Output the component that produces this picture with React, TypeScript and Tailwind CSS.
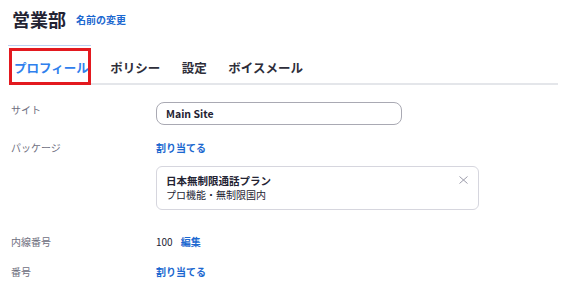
import React from "react";

export default function App() {
  const tabs = ["ポリシー", "設定", "ボイスメール"];
  return (
    <div className="w-[570px] h-[300px] bg-white overflow-hidden font-['Noto_Sans_CJK_JP','Noto_Sans',sans-serif] text-[#232333]">
      {/* Header */}
      <div className="pl-[12px] pt-[10px] flex items-center h-[28px]">
        <h1 className="text-[18px] leading-none font-bold text-[#232333]">営業部</h1>
        <a className="ml-[10px] mt-[2px] text-[10px] leading-none font-bold text-[#1c68d0]">名前の変更</a>
      </div>

      {/* Tabs */}
      <div className="mt-[20px] ml-[10px] mr-[12px] h-[37px] pt-[14px] px-[4px] border-b-2 border-[#e4e6ea] flex gap-[21.5px] relative">
        <div className="absolute left-[-2px] top-[-3px] w-[83px] h-[1px] bg-[#bcd2f3]" />
        <div className="absolute left-[-1px] top-0 w-[82px] h-[37px] border-[3px] border-[#e3191f]" />
        <span className="text-[12.5px] leading-none font-bold text-[#2f80ed]">プロフィール</span>
        {tabs.map((t) => (
          <span key={t} className="text-[12.5px] leading-none font-bold text-[#2e2e3a]">
            {t}
          </span>
        ))}
      </div>

      {/* Rows */}
      <div className="pl-[11px]">
        <div className="mt-[17px] flex">
          <div className="w-[145px] pt-[3px] text-[10px] leading-none text-[#6e6e7e]">サイト</div>
          <div className="w-[246px] h-[23px] rounded-[8px] border border-[#a9a9b3] pl-[9px] flex items-center text-[10.5px] font-semibold text-[#232333]">
            Main Site
          </div>
        </div>

        <div className="mt-[18px] flex">
          <div className="w-[145px] text-[10px] leading-none text-[#6e6e7e]">パッケージ</div>
          <a className="text-[10px] leading-none font-bold text-[#1c68d0]">割り当てる</a>
        </div>

        <div className="mt-[13px] ml-[145px] w-[323px] h-[44px] border border-[#d6d6de] rounded-[6px] pl-[9px] pr-[10px] pt-[9px] flex justify-between">
          <div>
            <div className="text-[10.5px] leading-none font-bold text-[#232333]">日本無制限通話プラン</div>
            <div className="mt-[3.5px] text-[10px] leading-none text-[#232333]">プロ機能・無制限国内</div>
          </div>
          <svg width="9" height="8" viewBox="0 0 9 8" className="mt-0">
            <path d="M0.5 0.5 L8.5 7.5 M8.5 0.5 L0.5 7.5" stroke="#9c9cab" strokeWidth="1" fill="none" />
          </svg>
        </div>

        <div className="mt-[26.5px] flex items-center">
          <div className="w-[145px] text-[10px] leading-none text-[#6e6e7e]">内線番号</div>
          <span className="text-[10px] leading-none text-[#232333]">100</span>
          <a className="ml-[8px] text-[10px] leading-none font-bold text-[#1c68d0]">編集</a>
        </div>

        <div className="mt-[20.5px] flex">
          <div className="w-[145px] text-[10px] leading-none text-[#6e6e7e]">番号</div>
          <a className="text-[10px] leading-none font-bold text-[#1c68d0]">割り当てる</a>
        </div>
      </div>
    </div>
  );
}
